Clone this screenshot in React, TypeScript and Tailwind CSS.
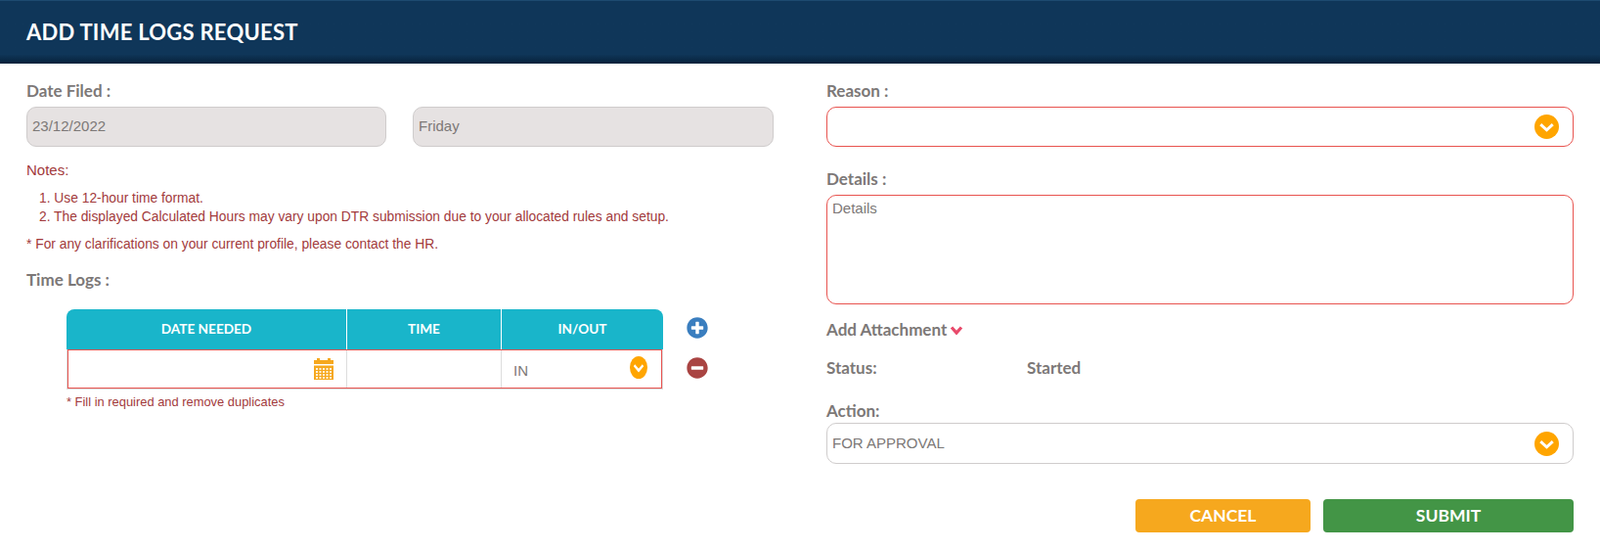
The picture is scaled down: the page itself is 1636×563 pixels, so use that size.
import React from 'react';
import { FaPlusCircle, FaMinusCircle } from 'react-icons/fa';

const LABEL = "font-['Lato'] font-bold text-[17px] leading-[20px] text-[#7c7877]";
const INPUT = "w-full rounded-[10px] border px-[5px] font-['Liberation_Sans'] text-[15px] text-[#7c7877] outline-none";

function ChevronCircle({ className }: { className: string }) {
  return (
    <svg viewBox="0 0 26 26" preserveAspectRatio="none" className={className}>
      <circle cx="13" cy="13" r="13" fill="#ffa500" />
      <path d="M6.5 10.5 13 16.5l6.5-6" fill="none" stroke="#fff" strokeWidth="3" />
    </svg>
  );
}

function CalendarIcon() {
  const cells = [];
  for (let row = 0; row < 4; row++) {
    for (let col = 0; col < 5; col++) {
      cells.push(<rect key={`${row}-${col}`} x={2 + col * 3.5} y={10 + row * 3} width="2" height="2" fill="#fff" fillOpacity="0.85" />);
    }
  }
  return (
    <svg viewBox="0 0 20 22" className="h-[22px] w-[20px]">
      <rect x="3" y="0" width="3" height="3" fill="#f6a81e" />
      <rect x="14" y="0" width="3" height="3" fill="#f6a81e" />
      <rect x="0" y="2" width="20" height="4" fill="#f6a81e" />
      <rect x="0" y="7.5" width="20" height="14.5" fill="#f6a81e" />
      {cells}
    </svg>
  );
}

function SelectBox({ value, border }: { value: string; border: string }) {
  return (
    <div className={`flex items-center justify-between rounded-[10px] border bg-white pl-[5px] pr-[14px] font-['Liberation_Sans'] text-[15px] text-[#7c7877] ${border}`}>
      <span>{value}</span>
      <ChevronCircle className="h-[25px] w-[25px]" />
    </div>
  );
}

export default function App() {
  return (
    <div className="h-[563px] w-[1636px] overflow-hidden bg-white">
      <div className="flex h-[65px] items-center border-t border-[#1d4a70] bg-gradient-to-b from-[#0f3659] from-85% to-[#07223b] pl-[27px]">
        <h1 className="font-['Lato'] text-[22px] font-bold leading-none tracking-[0.25px] text-white">ADD TIME LOGS REQUEST</h1>
      </div>

      <div className="flex pl-[27px]">
        {/* left column */}
        <div className="w-[764px] pt-[18px]">
          <div className={LABEL}>Date Filed :</div>
          <div className="mt-[6px] grid grid-cols-[368px_369px] gap-[27px]">
            <input readOnly value="23/12/2022" className={`${INPUT} h-[41px] border-[#cfcccc] bg-[#e6e2e2] pb-[2px]`} />
            <input readOnly value="Friday" className={`${INPUT} h-[41px] border-[#cfcccc] bg-[#e6e2e2] pb-[2px]`} />
          </div>

          <div className="mt-[14px] font-['Liberation_Sans'] text-[15px] leading-[20px] text-[#a23a3c]">Notes:</div>
          <ol className="mt-[9px] list-none pl-[13px] font-['Liberation_Sans'] text-[13.8px] leading-[19px] text-[#a23a3c]">
            <li>1. Use 12-hour time format.</li>
            <li>2. The displayed Calculated Hours may vary upon DTR submission due to your allocated rules and setup.</li>
          </ol>
          <p className="mt-[9px] font-['Liberation_Sans'] text-[13.8px] leading-[19px] text-[#a23a3c]">* For any clarifications on your current profile, please contact the HR.</p>

          <div className={`mt-[17px] ${LABEL}`}>Time Logs :</div>

          <div className="mt-[20px] ml-[41px] flex">
            <div className="w-[610px]">
              <div className="grid h-[41px] grid-cols-[287px_158px_165px] rounded-t-[8px] bg-[#19b5ca] font-['Lato'] text-[13.6px] font-bold text-white">
                <div className="flex items-center justify-center border-r border-white">DATE NEEDED</div>
                <div className="flex items-center justify-center border-r border-white">TIME</div>
                <div className="flex items-center justify-center">IN/OUT</div>
              </div>
              <div className="border-x border-b border-[#dddddd]">
                <div className="grid h-[40px] grid-cols-[285px_158px_163px] border border-[#e8534f]">
                  <div className="flex items-center justify-end border-r border-[#dddddd] pr-[13px]">
                    <CalendarIcon />
                  </div>
                  <div className="border-r border-[#dddddd]" />
                  <div className="flex items-center justify-between pl-[12px] pr-[14px] font-['Liberation_Sans'] text-[15px] text-[#7c7877]">
                    <span className="mt-[4px]">IN</span>
                    <ChevronCircle className="h-[23px] w-[18px] -mt-[3px]" />
                  </div>
                </div>
              </div>
              <p className="mt-[6px] font-['Liberation_Sans'] text-[12.9px] leading-[14px] text-[#a23a3c]">* Fill in required and remove duplicates</p>
            </div>
            <div className="ml-[24px] flex flex-col gap-[19px] pt-[8px]">
              <FaPlusCircle className="h-[22px] w-[22px] text-[#3a7ebf]" />
              <FaMinusCircle className="h-[22px] w-[22px] text-[#a94442]" />
            </div>
          </div>
        </div>

        {/* right column */}
        <div className="ml-[54px] w-[764px] pt-[18px]">
          <div className={LABEL}>Reason :</div>
          <div className="mt-[6px]">
            <SelectBox value="" border="h-[41px] border-[#e8534f]" />
          </div>

          <div className={`mt-[23px] ${LABEL}`}>Details :</div>
          <textarea
            placeholder="Details"
            className={`${INPUT} mt-[6px] block h-[112px] resize-none border-[#e8534f] bg-white py-[2px] placeholder:text-[#7c7877]`}
          />

          <div className="mt-[16px] flex items-center gap-[3px]">
            <span className={LABEL}>Add Attachment</span>
            <svg viewBox="0 0 14 11" className="h-[11px] w-[14px]">
              <path d="M2 2.5 7 8l5-5.5" fill="none" stroke="#e8496a" strokeWidth="3.2" />
            </svg>
          </div>

          <div className="mt-[19px] flex">
            <span className={`w-[205px] ${LABEL}`}>Status:</span>
            <span className={LABEL}>Started</span>
          </div>

          <div className={`mt-[24px] ${LABEL}`}>Action:</div>
          <div className="mt-[2px]">
            <SelectBox value="FOR APPROVAL" border="h-[42px] border-[#cfcccc]" />
          </div>

          <div className="mt-[36px] flex justify-end gap-[13px] font-['Lato'] text-[17.5px] font-bold text-white">
            <button className="h-[34px] w-[179px] rounded-[4px] bg-[#f6a81e]">CANCEL</button>
            <button className="h-[34px] w-[256px] rounded-[4px] bg-[#439546]">SUBMIT</button>
          </div>
        </div>
      </div>
    </div>
  );
}
